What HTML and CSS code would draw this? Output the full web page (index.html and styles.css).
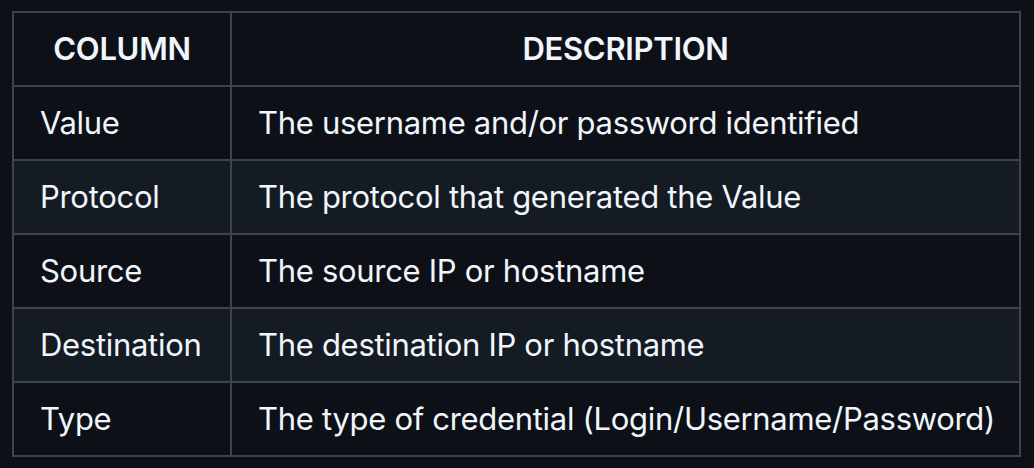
FILE: index.html
```html
<!DOCTYPE html>
<html>
<head>
<meta charset="utf-8">
<link rel="stylesheet" href="styles.css">
</head>
<body>
<div class="page">
<table class="doc-table">
  <thead>
    <tr><th class="col-name">COLUMN</th><th>DESCRIPTION</th></tr>
  </thead>
  <tbody>
    <tr><td>Value</td><td>The username and/or password identified</td></tr>
    <tr><td>Protocol</td><td>The protocol that generated the Value</td></tr>
    <tr><td>Source</td><td>The source IP or hostname</td></tr>
    <tr><td>Destination</td><td>The destination IP or hostname</td></tr>
    <tr><td>Type</td><td>The type of credential (Login/Username/Password)</td></tr>
  </tbody>
</table>
</div>
</body>
</html>
```
FILE: styles.css
```css
html, body {
  margin: 0;
  background: #0d1117;
}
.page {
  padding: 11px 12px;
}
.doc-table {
  border-collapse: collapse;
  table-layout: fixed;
  font-family: Inter, "Liberation Sans", sans-serif;
  font-size: 31px;
  letter-spacing: -0.3px;
  line-height: 48px;
  color: #f0f6fc;
  width: 1009px;
}
.doc-table th,
.doc-table td {
  border: 2px solid #3d444d;
  padding: 12px 26px;
  white-space: nowrap;
}
.doc-table th {
  font-weight: 600;
  text-align: center;
}
.doc-table .col-name {
  width: 164px;
}
.doc-table td {
  text-align: left;
}
.doc-table tbody tr:nth-child(odd) {
  background: #0d1117;
}
.doc-table tbody tr:nth-child(even) {
  background: #151b23;
}
```
